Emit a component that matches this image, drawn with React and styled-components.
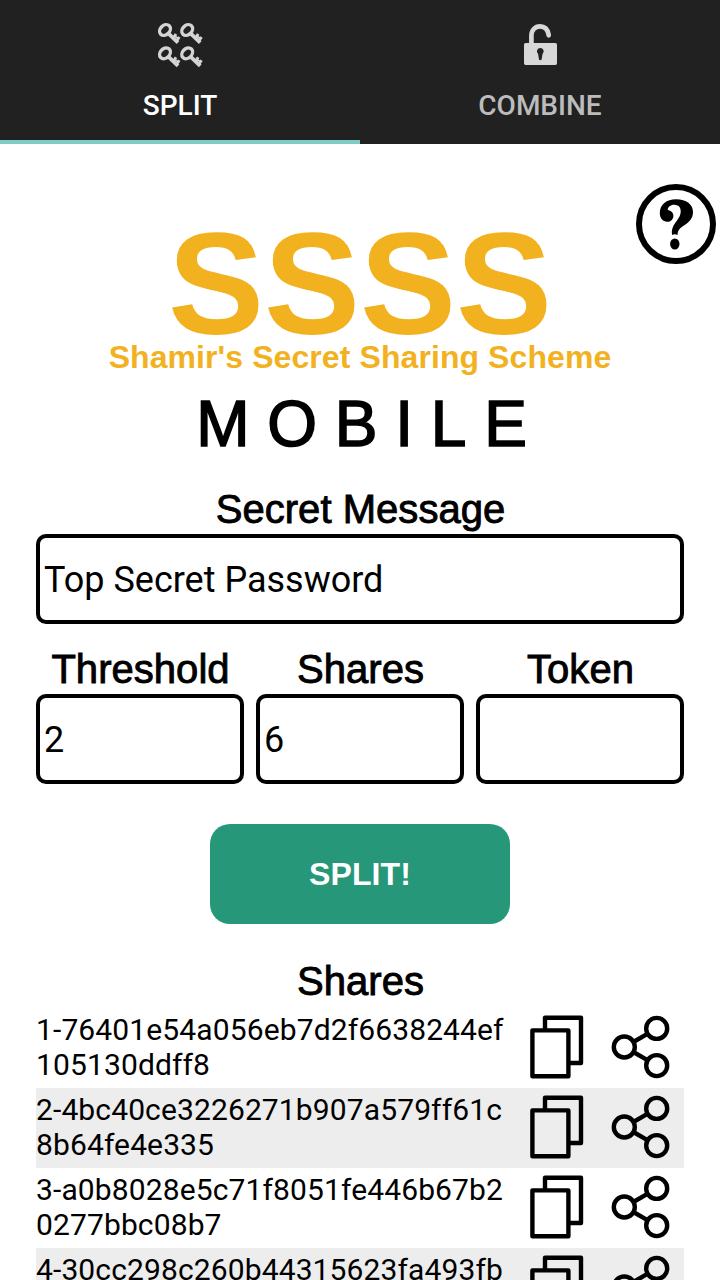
import React from "react";
import styled, { createGlobalStyle } from "styled-components";

const GlobalStyle = createGlobalStyle`
  * { box-sizing: border-box; }
  html, body { margin: 0; height: 100%; overflow: hidden; background: #fff; }
  svg { display: block; }
`;

const Screen = styled.div`
  position: relative;
  width: 720px;
  height: 1280px;
  overflow: hidden;
  background: #fff;
  color: #000;
  font-family: "Liberation Sans", sans-serif;
`;

const TabBar = styled.nav`
  display: flex;
  height: 144px;
  background: #212121;
`;

const Tab = styled.button`
  flex: 1;
  display: flex;
  flex-direction: column;
  align-items: center;
  gap: 20px;
  padding: 21px 0 0;
  border: 0;
  border-bottom: 4px solid ${(p) => (p.$active ? "#80cbc4" : "#212121")};
  background: none;
  color: ${(p) => (p.$active ? "#fff" : "#bcbcbc")};
  font: 500 28px/33px Roboto, sans-serif;
`;

const HelpButton = styled.button`
  position: absolute;
  top: 184px;
  right: 4px;
  padding: 0;
  border: 0;
  background: none;
`;

const Main = styled.main`
  display: flex;
  flex-direction: column;
  padding: 86px 36px 0;
`;

const Logo = styled.header`
  display: flex;
  flex-direction: column;
  align-items: center;
  color: #f2b21f;
  font-weight: 700;
  white-space: nowrap;
`;

const LogoMark = styled.div`
  font-size: 144px;
  line-height: 110px;
`;

const LogoName = styled.div`
  margin-top: -1px;
  font-size: 32px;
  line-height: 36px;
  letter-spacing: 0.08px;
`;

const LogoEdition = styled.div`
  margin-top: 13px;
  padding-left: 3px;
  color: #000;
  font-size: 64px;
  font-weight: 400;
  font-kerning: none;
  line-height: 72px;
  -webkit-text-stroke: 1.6px #000;
`;

const Form = styled.form`
  display: flex;
  flex-direction: column;
  align-items: center;
  gap: 22px;
  padding-top: 26px;
`;

const FieldRow = styled.div`
  display: flex;
  gap: 12px;
  width: 100%;
`;

const Field = styled.label`
  flex: 1;
  min-width: 0;
  display: flex;
  flex-direction: column;
`;

const Caption = styled.span`
  padding-left: 1px;
  font-size: 40px;
  line-height: 46px;
  text-align: center;
  letter-spacing: 0.04px;
  -webkit-text-stroke: 0.9px #000;
`;

const Input = styled.input`
  width: 100%;
  height: 90px;
  margin-top: 2px;
  padding: 1px 4px 0;
  border: 4px solid #000;
  border-radius: 10px;
  outline: 0;
  background: #fff;
  color: #000;
  font: 400 36px Roboto, sans-serif;
`;

const SplitButton = styled.button`
  width: 300px;
  height: 100px;
  margin-top: 18px;
  padding: 0;
  border: 0;
  border-radius: 20px;
  background: #269778;
  color: #fff;
  font: 700 32px "Liberation Sans", sans-serif;
  letter-spacing: 0.1px;
`;

const Shares = styled.section`
  display: flex;
  flex-direction: column;
  padding-top: 34px;
`;

const ShareList = styled.ul`
  margin: 4px 0 0;
  padding: 0;
  list-style: none;
`;

const ShareRow = styled.li`
  display: flex;
  height: 80px;
  background: ${(p) => (p.$shaded ? "#ededed" : "#fff")};
`;

const ShareText = styled.span`
  width: 480px;
  padding-top: 4px;
  font: 400 30px/35px Roboto, sans-serif;
  letter-spacing: 0.12px;
  word-break: break-all;
`;

const IconButton = styled.button`
  padding: 0;
  border: 0;
  background: none;
`;

const Key = ({ x, y }) => (
  <g transform={`translate(${x} ${y})`} fill="none" stroke="#d4d4d4">
    <ellipse cx="7" cy="7" rx="6" ry="4.7" strokeWidth="3.4" transform="rotate(-45 7 7)" />
    <path d="M10.600 10.600 20 19.600" strokeWidth="3.800" />
    <path d="M15.200 15.200l2.800-4.200M18.600 18l2.700-4" strokeWidth="2.900" />
    <path d="M16.400 13l4.200 2.600" strokeWidth="1.800" />
  </g>
);

const KeysIcon = () => (
  <svg width="48" height="48" viewBox="0 0 48 48" aria-hidden="true">
    <Key x={2} y={2} />
    <Key x={24.2} y={2} />
    <Key x={2} y={25.3} />
    <Key x={24.2} y={25.3} />
  </svg>
);

const UnlockIcon = () => (
  <svg width="48" height="48" viewBox="0 0 48 48" aria-hidden="true">
    <path
      d="M15.400 24V14.600C15.400 9.400 19 5.300 24 5.300c4.400 0 7.600 2.900 8.600 8.200l.1.800"
      fill="none"
      stroke="#d8d8d8"
      strokeWidth="4.7"
      strokeLinecap="round"
    />
    <path
      fillRule="evenodd"
      fill="#d8d8d8"
      d="M9.600 22h29.800q1.600 0 1.600 1.800v18.400q0 1.800-1.600 1.800H9.600Q8 44 8 42.200V23.800Q8 22 9.600 22ZM24.300 27a3.400 3.400 0 0 0-2.200 6l.8 5q.2 1.300 1.400 1.300t1.400-1.300l.8-5a3.400 3.400 0 0 0-2.200-6Z"
    />
  </svg>
);

const HelpIcon = () => (
  <svg width="80" height="80" viewBox="0 0 80 80" aria-hidden="true">
    <circle cx="40" cy="40" r="37" fill="#fff" stroke="#000" strokeWidth="6" />
    <path d="M36 51C35.300 46 36.500 42.500 39.500 38.500C43.500 33.500 44.800 30.500 44.700 27C44.600 22.800 42.200 20.800 38.500 20.700C34.500 20.600 31.500 23.200 31.800 26C35 26.600 37.500 28.800 37.400 32C37.300 35.500 34.600 37.900 31.200 37.800C26.700 37.600 23.800 34 23.800 29C23.800 20.500 30.500 15.300 40 15.300C50.500 15.300 57 20.600 57 28C57 34.500 53 38.500 48 41.500C43.500 44.200 41.800 46.500 41.500 51Q38.800 49.600 36 51Z" />
    <ellipse cx="38.800" cy="60" rx="4.700" ry="5.500" />
  </svg>
);

const CopyIcon = () => (
  <svg width="70" height="80" viewBox="0 0 70 80" fill="none" stroke="#000" strokeWidth="4.4" strokeLinejoin="round" aria-hidden="true">
    <path d="M29 21V9.800H65V55H54" />
    <path d="M16.400 22.400H52.400V68.200H16.400Z" />
  </svg>
);

const ShareIcon = () => (
  <svg width="98" height="80" viewBox="0 0 98 80" fill="none" stroke="#000" strokeWidth="4.4" aria-hidden="true">
    <circle cx="38.300" cy="39" r="10.500" />
    <circle cx="70.700" cy="20.400" r="10.500" />
    <circle cx="70.700" cy="57.600" r="10.500" />
    <path d="M48.200 33.500 61 26.200M48.200 44.500 61 51.800" />
  </svg>
);

const shares = [
  "1-76401e54a056eb7d2f6638244ef105130ddff8",
  "2-4bc40ce3226271b907a579ff61c8b64fe4e335",
  "3-a0b8028e5c71f8051fe446b67b20277bbc08b7",
  "4-30cc298c260b44315623fa493fb",
];

const LabeledInput = ({ label, value }) => (
  <Field>
    <Caption>{label}</Caption>
    <Input defaultValue={value} />
  </Field>
);

export default function App() {
  return (
    <>
      <GlobalStyle />
      <Screen>
        <TabBar>
          <Tab $active>
            <KeysIcon />
            SPLIT
          </Tab>
          <Tab>
            <UnlockIcon />
            COMBINE
          </Tab>
        </TabBar>
        <HelpButton aria-label="Help">
          <HelpIcon />
        </HelpButton>
        <Main>
          <Logo>
            <LogoMark>SSSS</LogoMark>
            <LogoName>Shamir's Secret Sharing Scheme</LogoName>
            <LogoEdition>M O B I L E</LogoEdition>
          </Logo>
          <Form>
            <FieldRow>
              <LabeledInput label="Secret Message" value="Top Secret Password" />
            </FieldRow>
            <FieldRow>
              <LabeledInput label="Threshold" value="2" />
              <LabeledInput label="Shares" value="6" />
              <LabeledInput label="Token" value="" />
            </FieldRow>
            <SplitButton type="button">SPLIT!</SplitButton>
          </Form>
          <Shares>
            <Caption>Shares</Caption>
            <ShareList>
              {shares.map((share, i) => (
                <ShareRow key={share} $shaded={i % 2 === 1}>
                  <ShareText>{share}</ShareText>
                  <IconButton aria-label="Copy">
                    <CopyIcon />
                  </IconButton>
                  <IconButton aria-label="Share">
                    <ShareIcon />
                  </IconButton>
                </ShareRow>
              ))}
            </ShareList>
          </Shares>
        </Main>
      </Screen>
    </>
  );
}
